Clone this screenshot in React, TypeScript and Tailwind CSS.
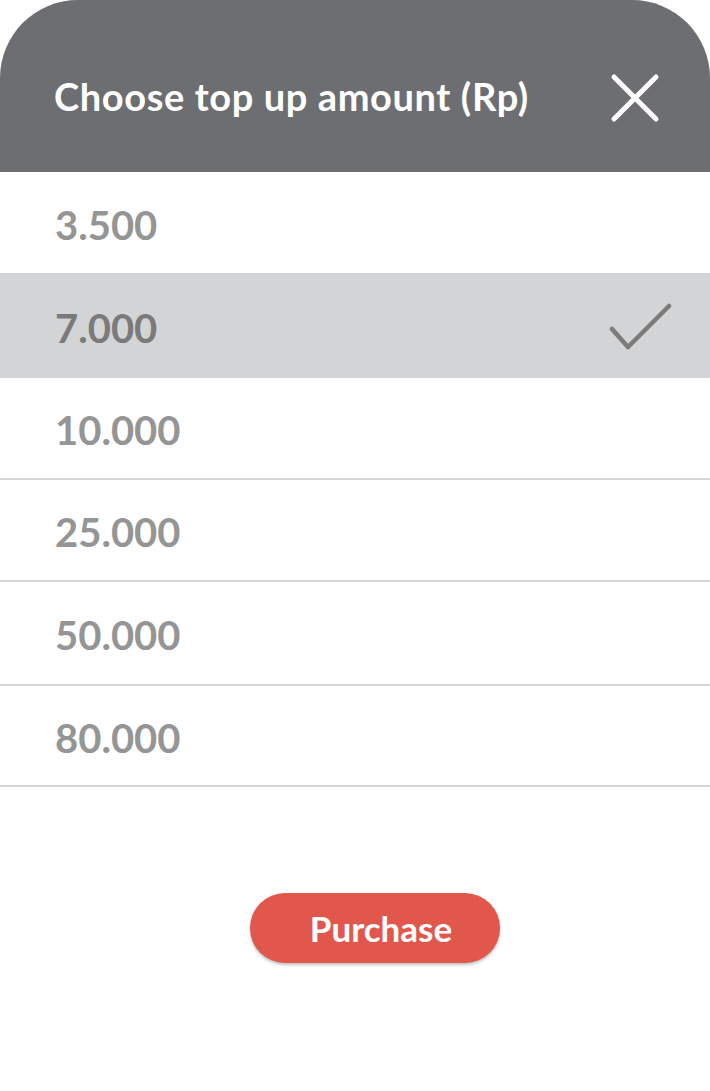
import React from "react";

const amounts = ["3.500", "7.000", "10.000", "25.000", "50.000", "80.000"];
const heights = ["h-[101px]", "h-[105px]", "h-[102px]", "h-[102px]", "h-[104px]", "h-[101px]"];

export default function App() {
  return (
    <div className="w-[710px] h-[1091px] bg-white flex flex-col" style={{ fontFamily: "Lato, 'Noto Sans', sans-serif" }}>
      <div className="h-[172px] bg-[#6d6e72] rounded-t-[78px] flex items-center justify-between pl-[54px] pr-[50px] shrink-0">
        <h1 className="text-white font-bold text-[38px] tracking-[0.6px] pt-[20px] leading-none">Choose top up amount (Rp)</h1>
        <svg width="50" height="50" viewBox="0 0 50 50" className="mt-[24px]">
          <path d="M4 4 L46 46 M46 4 L4 46" stroke="white" strokeWidth="5" strokeLinecap="round" />
        </svg>
      </div>
      <div className="flex flex-col">
        {amounts.map((a, i) => {
          const selected = i === 1;
          const border = i >= 2 ? "border-b-2 border-[#d5d5d5]" : "";
          return (
            <div
              key={a}
              className={`${heights[i]} ${border} ${selected ? "bg-[#d3d4d6]" : ""} flex items-center justify-between pl-[55px] pr-[37px]`}
            >
              <span className={`font-bold text-[40px] leading-none pt-[4px] ${selected ? "text-[#7a7a7a]" : "text-[#959595]"}`}>{a}</span>
              {selected && (
                <svg width="64" height="48" viewBox="0 0 64 48">
                  <path d="M3 27 L19 45 L60 4" fill="none" stroke="#7b7b7b" strokeWidth="4.5" strokeLinecap="round" strokeLinejoin="round" />
                </svg>
              )}
            </div>
          );
        })}
      </div>
      <div className="flex justify-center pt-[106px] pl-[40px]">
        <button className="w-[250px] h-[70px] rounded-full bg-[#e2574c] text-white font-bold text-[35px] shadow-[0_2px_3px_rgba(0,0,0,0.25)] flex items-center justify-center pl-[12px]">
          Purchase
        </button>
      </div>
    </div>
  );
}
